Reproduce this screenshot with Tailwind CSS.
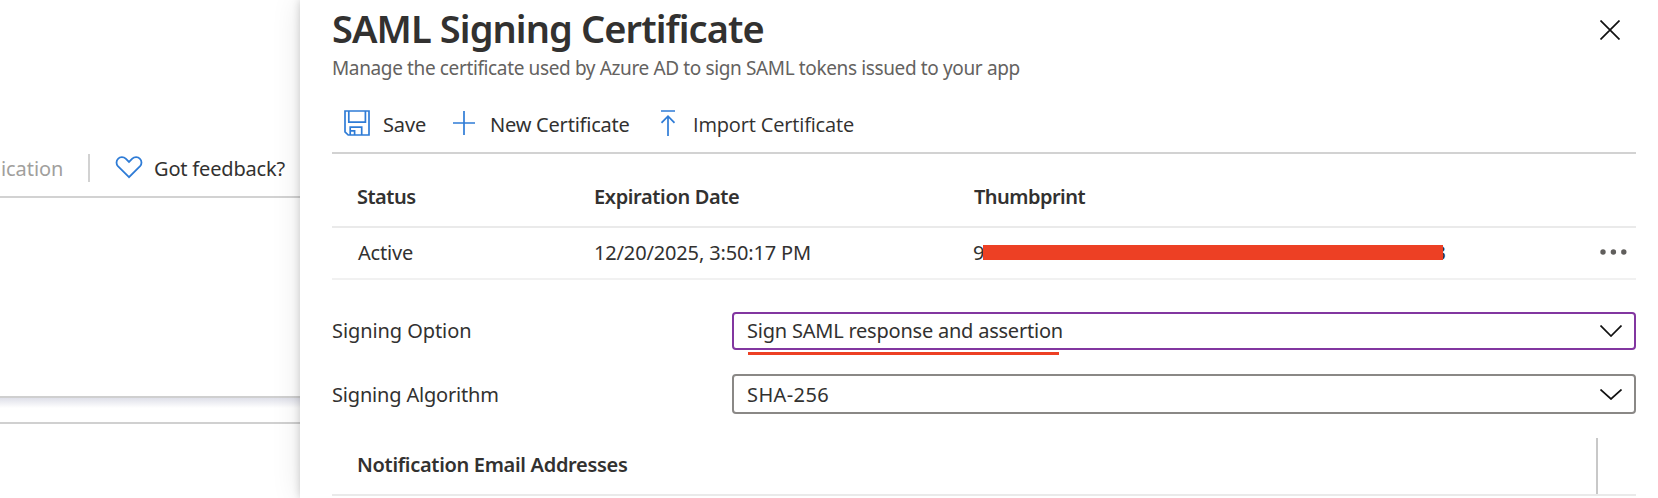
<!DOCTYPE html>
<html lang="en">
<head>
<meta charset="utf-8">
<title>SAML Signing Certificate</title>
<script src="https://cdn.jsdelivr.net/npm/@tailwindcss/browser@4"></script>
</head>
<body class="flex h-[498px] w-[1658px] overflow-hidden bg-white font-['Noto_Sans',sans-serif] text-[20px] leading-7 whitespace-nowrap text-[#323130]">

<div class="flex w-[300px] shrink-0 flex-col">
  <div class="flex h-[198px] items-end border-b-2 border-[#d2d2d2]">
    <div class="flex h-14 items-center">
      <span class="w-[88px] pt-0.5 pl-px tracking-[-0.08px] text-[#a19f9d]">ication</span>
      <span class="h-7 w-0.5 bg-[#d2d2d2]"></span>
      <svg class="ml-[25px] size-7" viewBox="0 0 28 28" fill="none" stroke="#2f7cd6" stroke-width="1.8"><path d="M14 23.2 2.9 12.1C1 10.1 1.1 6.7 3 4.8c2.100-2.200 5.600-2.200 7.700-.1L14 8l3.300-3.300c2.100-2.100 5.600-2.100 7.700.1 1.900 1.900 2 5.300.1 7.300z"/></svg>
      <span class="ml-[11px] pt-0.5 tracking-[-0.18px]">Got feedback?</span>
    </div>
  </div>
  <div class="h-[200px] border-b-2 border-[#cfcfcf]"></div>
  <div class="h-2.5 bg-linear-to-b from-[#dfe0e9] to-white"></div>
  <div class="h-4 border-b-2 border-[#d0d0d0]"></div>
</div>

<main class="relative flex flex-1 flex-col bg-white pr-[22px] pl-8 shadow-[0_0_28px_rgba(0,0,0,0.10),0_0_8px_rgba(0,0,0,0.18)]">
  <header class="flex justify-between">
    <div>
      <h1 class="h-[55px] pt-px text-[38px] leading-[54px] font-semibold tracking-[-0.91px]">SAML Signing Certificate</h1>
      <p class="h-[25px] text-[19px] leading-[26px] tracking-[-0.37px] text-[#646260]">Manage the certificate used by Azure AD to sign SAML tokens issued to your app</p>
    </div>
    <svg class="mt-5 mr-4 size-5" viewBox="0 0 20 20" fill="none" stroke="#111" stroke-width="1.7"><path d="M.5.500l19 19M19.500.500l-19 19"/></svg>
  </header>

  <div class="mt-4 flex h-[58px] items-center border-b-2 border-[#d2d2d2] pl-3">
    <svg class="size-[26px] -translate-y-px" viewBox="0 0 26 26" fill="none" stroke="#2f7cd6" stroke-width="1.7"><path d="M1 1h24v24H4.200L1 21.800zM4.800 1v11.200h16.600V1M6.200 25v-7.800h11.500V25M7 20.900h3.600V25"/></svg>
    <span class="ml-[13px] w-[57px] pt-0.5 tracking-[-0.12px]">Save</span>
    <svg class="ml-[13px] h-6 w-[22px] -translate-y-px" viewBox="0 0 22 24" fill="none" stroke="#2f7cd6" stroke-width="1.700"><path d="M11 0v24M0 12h22"/></svg>
    <span class="ml-[15px] w-[157px] pt-0.5 tracking-[-0.22px]">New Certificate</span>
    <svg class="ml-3.5 h-[26px] w-[14px] -translate-y-px" viewBox="0 0 14 26" fill="none" stroke="#2f7cd6" stroke-width="1.700"><path d="M0 1h14M7 26V6M.5 12.800 7 6.200l6.500 6.600"/></svg>
    <span class="ml-[18px] pt-0.5 font-['Open_Sans'] tracking-[-0.16px]">Import Certificate</span>
  </div>

  <div class="grid h-[74px] grid-cols-[237px_379px_1fr] items-center border-b-2 border-[#eaeaea] pt-3.5 pl-[26px] font-semibold">
    <span class="-ml-px tracking-[-0.5px]">Status</span>
    <span class="-ml-px tracking-[-0.36px]">Expiration Date</span>
    <span class="tracking-[-0.54px]">Thumbprint</span>
  </div>
  <div class="grid h-[52px] grid-cols-[237px_379px_1fr_auto] items-center border-b-2 border-[#f1f1f1] pr-2 pl-[26px]">
    <span class="tracking-[-0.18px]">Active</span>
    <span class="-ml-px tracking-[-0.15px]">12/20/2025, 3:50:17 PM</span>
    <span class="relative w-[472px]"><span class="-ml-px">9</span><span class="absolute right-0">3</span><span class="absolute top-1.5 left-[9px] h-[15px] w-[460px] bg-[#ed4024]"></span></span>
    <svg class="h-1.5 w-7 -translate-y-px" viewBox="0 0 28 6" fill="#605e5c"><circle cx="3" cy="3" r="2.700"/><circle cx="13.400" cy="3" r="2.700"/><circle cx="23.800" cy="3" r="2.700"/></svg>
  </div>

  <div class="mt-8 flex h-[38px] items-center">
    <span class="w-[400px] tracking-[-0.08px]">Signing Option</span>
    <div class="relative flex h-full flex-1 items-center justify-between rounded-[4px] border-2 border-[#8236a0] pr-3 pl-[13px]">
      <span class="tracking-[-0.22px]">Sign SAML response and assertion</span>
      <svg class="h-3 w-[22px]" viewBox="0 0 22 12" fill="none" stroke="#111" stroke-width="1.700"><path d="M.5.500 11 11 21.500.500"/></svg>
      <span class="absolute top-[38px] left-3.5 h-[3px] w-[311px] bg-[#ed4024]"></span>
    </div>
  </div>
  <div class="mt-6 flex h-10 items-center">
    <span class="w-[400px] pt-0.5 tracking-[-0.18px]">Signing Algorithm</span>
    <div class="flex h-full flex-1 items-center justify-between rounded-[4px] border-2 border-[#8a8886] pr-3 pl-[13px]">
      <span class="pt-0.5 tracking-[0.4px]">SHA-256</span>
      <svg class="h-[11px] w-[22px]" viewBox="0 0 22 11" fill="none" stroke="#111" stroke-width="1.700"><path d="M.5.500 11 10 21.500.500"/></svg>
    </div>
  </div>

  <div class="mt-6 flex h-[58px] border-b-2 border-[#eaeaea] pr-[38px] pl-[25px]">
    <div class="flex flex-1 items-center border-r-2 border-[#c8c8c8] pb-0.5 font-semibold tracking-[-0.31px]"><span>Notification Email Addresses</span></div>
  </div>
</main>
</body>
</html>
